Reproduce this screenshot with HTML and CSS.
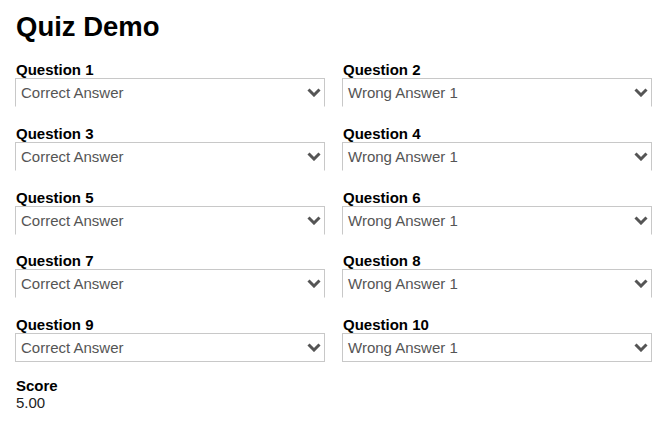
FILE: index.html
```html
<!DOCTYPE html>
<html lang="en">
<head>
<meta charset="utf-8">
<title>Quiz Demo</title>
<link rel="stylesheet" href="styles.css">
</head>
<body>
<main class="page">
  <h1 class="title">Quiz Demo</h1>
  <div class="grid">
    <div class="field"><div class="label">Question 1</div><div class="select open">Correct Answer<svg class="chev" viewBox="0 0 14 9"><path d="M1.5 1.5 L7 7 L12.5 1.5"/></svg></div></div>
    <div class="field"><div class="label">Question 2</div><div class="select open">Wrong Answer 1<svg class="chev" viewBox="0 0 14 9"><path d="M1.5 1.5 L7 7 L12.5 1.5"/></svg></div></div>
    <div class="field"><div class="label">Question 3</div><div class="select open">Correct Answer<svg class="chev" viewBox="0 0 14 9"><path d="M1.5 1.5 L7 7 L12.5 1.5"/></svg></div></div>
    <div class="field"><div class="label">Question 4</div><div class="select open">Wrong Answer 1<svg class="chev" viewBox="0 0 14 9"><path d="M1.5 1.5 L7 7 L12.5 1.5"/></svg></div></div>
    <div class="field"><div class="label">Question 5</div><div class="select open">Correct Answer<svg class="chev" viewBox="0 0 14 9"><path d="M1.5 1.5 L7 7 L12.5 1.5"/></svg></div></div>
    <div class="field"><div class="label">Question 6</div><div class="select open">Wrong Answer 1<svg class="chev" viewBox="0 0 14 9"><path d="M1.5 1.5 L7 7 L12.5 1.5"/></svg></div></div>
    <div class="field"><div class="label">Question 7</div><div class="select open">Correct Answer<svg class="chev" viewBox="0 0 14 9"><path d="M1.5 1.5 L7 7 L12.5 1.5"/></svg></div></div>
    <div class="field"><div class="label">Question 8</div><div class="select open">Wrong Answer 1<svg class="chev" viewBox="0 0 14 9"><path d="M1.5 1.5 L7 7 L12.5 1.5"/></svg></div></div>
    <div class="field"><div class="label">Question 9</div><div class="select">Correct Answer<svg class="chev" viewBox="0 0 14 9"><path d="M1.5 1.5 L7 7 L12.5 1.5"/></svg></div></div>
    <div class="field"><div class="label">Question 10</div><div class="select">Wrong Answer 1<svg class="chev" viewBox="0 0 14 9"><path d="M1.5 1.5 L7 7 L12.5 1.5"/></svg></div></div>
  </div>
  <div class="score">
    <div class="label">Score</div>
    <div class="value">5.00</div>
  </div>
</main>
</body>
</html>
```
FILE: styles.css
```css
html, body {
  margin: 0;
  padding: 0;
  background: #fff;
}
body {
  font-family: "Liberation Sans", Arial, sans-serif;
  color: #000;
}
.page {
  padding: 12px 15px 0 15px;
}
.title {
  margin: 0 0 0 1px;
  font-size: 27.5px;
  line-height: 30px;
  font-weight: bold;
}
.grid {
  margin-top: 19px;
  display: grid;
  grid-template-columns: 310px 310px;
  column-gap: 17px;
  row-gap: 17.75px;
}
.label {
  font-size: 15px;
  font-weight: bold;
  line-height: 17px;
  margin-left: 1px;
}
.select {
  box-sizing: border-box;
  height: 29px;
  border: 1px solid #c8c8c8;
  display: flex;
  align-items: center;
  justify-content: space-between;
  padding: 0 3px 0 5px;
  font-size: 15px;
  color: #555;
}
.select.open {
  border-bottom-color: transparent;
}
.chev {
  width: 14px;
  height: 9px;
  fill: none;
  stroke: #555;
  stroke-width: 3;
}
.score {
  margin-top: 15px;
}
.value {
  font-size: 15px;
  color: #222;
  margin-left: 1px;
  line-height: 17px;
}
```
